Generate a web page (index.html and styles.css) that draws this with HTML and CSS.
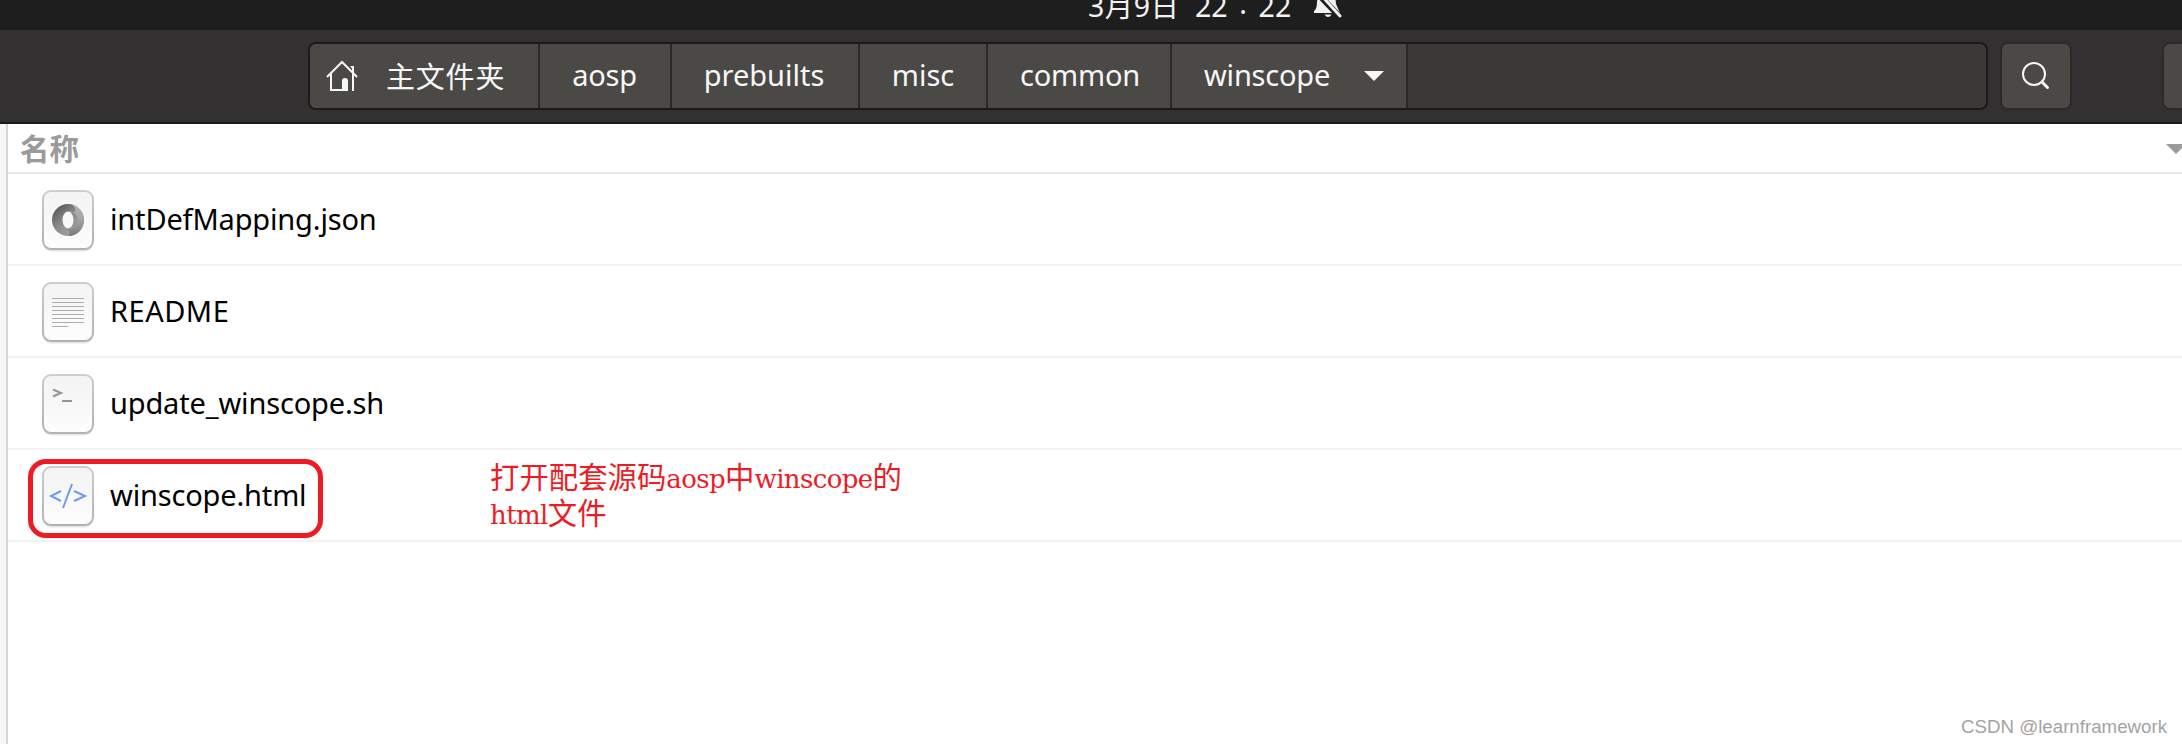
FILE: index.html
```html
<!DOCTYPE html>
<html lang="zh-CN">
<head>
<meta charset="utf-8">
<title>winscope</title>
<link rel="stylesheet" href="styles.css">
</head>
<body>
<svg class="defs" width="0" height="0" aria-hidden="true">
  <defs>
    <linearGradient id="page" x1="0" y1="0" x2="0" y2="1"><stop offset="0" stop-color="#f3f3f3"/><stop offset="1" stop-color="#fdfdfd"/></linearGradient>
    <linearGradient id="edge" x1="0" y1="0" x2="0" y2="1"><stop offset="0" stop-color="#cdcdcd"/><stop offset="1" stop-color="#b2b2b2"/></linearGradient>
    <linearGradient id="swirlA" x1="0" y1="0" x2=".8" y2="1"><stop offset="0" stop-color="#484848"/><stop offset=".5" stop-color="#8a8a8a"/><stop offset="1" stop-color="#a8a8a8"/></linearGradient>
    <linearGradient id="swirlB" x1="0" y1="0" x2="0" y2="1"><stop offset="0" stop-color="#b4b4b4"/><stop offset=".5" stop-color="#a2a2a2"/><stop offset="1" stop-color="#7c7c7c"/></linearGradient>
    <symbol id="sheet" viewBox="0 0 52 62">
      <rect x="1" y="3" width="50" height="58.5" rx="8" fill="#e6e6e6"/>
      <rect x="1" y="1" width="50" height="58" rx="8" fill="url(#page)" stroke="url(#edge)" stroke-width="2"/>
    </symbol>
  </defs>
</svg>

<header class="topbar">
  <span class="date">3月9日</span>
  <span class="time">22<span class="dot">.</span>22</span>
  <svg class="bell" viewBox="0 0 28 24"><path d="M4 0H21L22 10L26 19H0V17Q3 15 3 8Z" fill="#f2f2f2"/><path d="M10.500 20.500H17.500Q16 23 14 23T10.500 20.500Z" fill="#f2f2f2"/><path d="M5 1L27 24" stroke="#1e1e1e" stroke-width="6"/><path d="M7 1L26 22" stroke="#f2f2f2" stroke-width="3" stroke-linecap="round"/></svg>
</header>

<nav class="toolbar">
  <div class="pathbar">
    <a class="seg home"><svg class="house" viewBox="0 0 32 32"><g fill="none" stroke="#f7f7f7" stroke-width="2"><path d="M1 18L16 3L31 18"/><path d="M5 15V31H21"/><path d="M27 32V9"/></g><path d="M24 7H28V12ZM16 31V22Q16 19 19 19T22 22V32H16Z" fill="#f7f7f7"/></svg><span>主文件夹</span></a>
    <a class="seg aosp">aosp</a>
    <a class="seg prebuilts">prebuilts</a>
    <a class="seg misc">misc</a>
    <a class="seg common">common</a>
    <a class="seg current">winscope<svg class="caret" viewBox="0 0 20 10"><path d="M0 0H20L10 10Z" fill="#f7f7f7"/></svg></a>
  </div>
  <button class="tool search"><svg viewBox="0 0 30 30"><circle cx="13" cy="13" r="11" fill="none" stroke="#f7f7f7" stroke-width="2"/><path d="M21 21L26.500 26.500" stroke="#f7f7f7" stroke-width="3" stroke-linecap="round"/></svg></button>
  <button class="tool view"></button>
</nav>

<main class="content">
  <div class="sidebar-edge"></div>
  <section class="list">
    <div class="columns"><span>名称</span><svg class="sort" viewBox="0 0 20 10"><path d="M0 0H20L10 10Z" fill="#9a9a9a"/></svg></div>
    <div class="row">
      <svg class="file" viewBox="0 0 52 62"><use href="#sheet"/><circle cx="26" cy="30" r="16" fill="url(#swirlA)"/><path d="M26 22C33 19 39 29 34 36C31 39.500 27 39 25 38C29 43 27 46 26 46C36 46 42 38.500 42 30C42 23 37 16 30 14.500C36 20 34 24 26 22Z" fill="url(#swirlB)"/><ellipse cx="26" cy="30" rx="5.500" ry="8.500" fill="#f8f8f8"/></svg>
      <span>intDefMapping.json</span>
    </div>
    <div class="row">
      <svg class="file" viewBox="0 0 52 62"><use href="#sheet"/><path d="M10 16.500H42M10 20.500H42M10 24.500H42M10 28.500H42M10 32.500H42M10 36.500H42M10 40.500H42M10 44.500H26" stroke="#adadad" stroke-width="1"/></svg>
      <span class="caps">README</span>
    </div>
    <div class="row">
      <svg class="file" viewBox="0 0 52 62"><use href="#sheet"/><path d="M11 15.500L19 19L11 22.500M20 27H30" fill="none" stroke="#969696" stroke-width="2"/></svg>
      <span>update_winscope.sh</span>
    </div>
    <div class="row">
      <svg class="file" viewBox="0 0 52 62"><use href="#sheet"/><path d="M19 25L9 30L19 35M30 18L21 42M32 25L43 30L32 35" fill="none" stroke="#6f97f5" stroke-width="2"/></svg>
      <span>winscope.html</span>
      <div class="highlight"></div>
      <p class="note">打开配套源码<i>aosp</i>中<i>winscope</i>的<br><i>html</i>文件</p>
    </div>
  </section>
</main>
<div class="watermark">CSDN @learnframework</div>
</body>
</html>
```
FILE: styles.css
```css
* { box-sizing: border-box; }
body {
  margin: 0;
  width: 2182px;
  height: 744px;
  overflow: hidden;
  position: relative;
  display: flex;
  flex-direction: column;
  background: #fff;
  color: #000;
  font: 29px/40px "Noto Sans", "Noto Sans CJK SC", sans-serif;
}
svg { display: block; flex: none; }
.defs { position: absolute; }

.topbar {
  height: 30px;
  flex: none;
  display: flex;
  overflow: hidden;
  padding-left: 1088px;
  background: #1e1e1e;
  color: #f2f2f2;
  font-size: 28.5px;
  line-height: 40px;
}
.topbar > span { flex: none; margin-top: -14px; white-space: nowrap; }
.date { width: 107px; letter-spacing: 0.5px; }
.time { width: 119px; display: flex; }
.dot { margin-top: -3px; width: 31px; text-align: center; }
.bell { width: 28px; height: 24px; margin-top: -6px; }

.toolbar {
  height: 94px;
  flex: none;
  display: flex;
  overflow: hidden;
  padding: 12px 0 0 308px;
  background: #323031;
  border-bottom: 2px solid #1b1a1a;
}
.pathbar {
  width: 1680px;
  height: 68px;
  flex: none;
  display: flex;
  overflow: hidden;
  background: #3a3936;
  border: 2px solid #1b1a1a;
  border-radius: 8px;
}
.seg {
  flex: none;
  display: flex;
  align-items: center;
  justify-content: center;
  padding-bottom: 3px;
  background: #4a4946;
  border-right: 2px solid #2b2a29;
  color: #f7f7f7;
}
.home { width: 230px; justify-content: flex-start; padding-left: 16px; }
.home span { margin-top: 4px; letter-spacing: 0.8px; }
.house { width: 32px; height: 32px; margin-right: 28px; }
.aosp { width: 132px; letter-spacing: -0.2px; padding-right: 1px; }
.prebuilts { width: 188px; padding-right: 2px; }
.misc { width: 128px; }
.common { width: 184px; letter-spacing: -0.2px; padding-left: 2px; }
.current { width: 236px; justify-content: flex-start; padding-left: 32px; letter-spacing: -0.2px; }
.caret { width: 20px; height: 10px; margin: 3px 0 0 34px; }
.tool {
  width: 72px;
  height: 68px;
  flex: none;
  padding: 0 0 0 19px;
  background: #4a4946;
  border: 2px solid #2b2a29;
  border-radius: 8px;
}
.search { margin-left: 12px; }
.search svg { width: 30px; height: 30px; }
.view { margin-left: 90px; }

.content { flex: 1; display: flex; }
.sidebar-edge { width: 8px; background: #f6f6f6; border-right: 2px solid #d6d6d6; }
.list { flex: 1; min-width: 0; overflow: hidden; }
.columns {
  height: 50px;
  display: flex;
  justify-content: space-between;
  padding: 5px 0 0 12px;
  border-bottom: 2px solid #e6e6e6;
  color: #9a9a9a;
  font-weight: 700;
  font-size: 29.5px;
}
.sort { width: 20px; height: 10px; margin: 15px -4px 0 0; }
.row {
  position: relative;
  height: 92px;
  display: flex;
  padding: 16px 0 0 34px;
  border-bottom: 2px solid #f2f2f2;
}
.file { width: 52px; height: 62px; }
.row > span { margin: 9px 0 0 16px; letter-spacing: -0.16px; }
.row > .caps { letter-spacing: 0.5px; }
.highlight {
  position: absolute;
  left: 20px;
  top: 9px;
  width: 295px;
  height: 79px;
  border: 5px solid #ed1c24;
  border-radius: 18px;
}
.note {
  position: absolute;
  left: 482px;
  top: 7px;
  margin: 0;
  color: #ed1c24;
  font: 29.4px/36px "Noto Sans CJK SC", sans-serif;
  white-space: nowrap;
}
.note i { font: 26px/1 "DejaVu Serif", serif; letter-spacing: -0.6px; }

.watermark {
  position: absolute;
  right: 15px;
  bottom: 5px;
  color: #a3a3a3;
  font: 18.7px/24px "Liberation Sans", sans-serif;
  text-shadow: -1px -1px 0 #fff;
}
```
